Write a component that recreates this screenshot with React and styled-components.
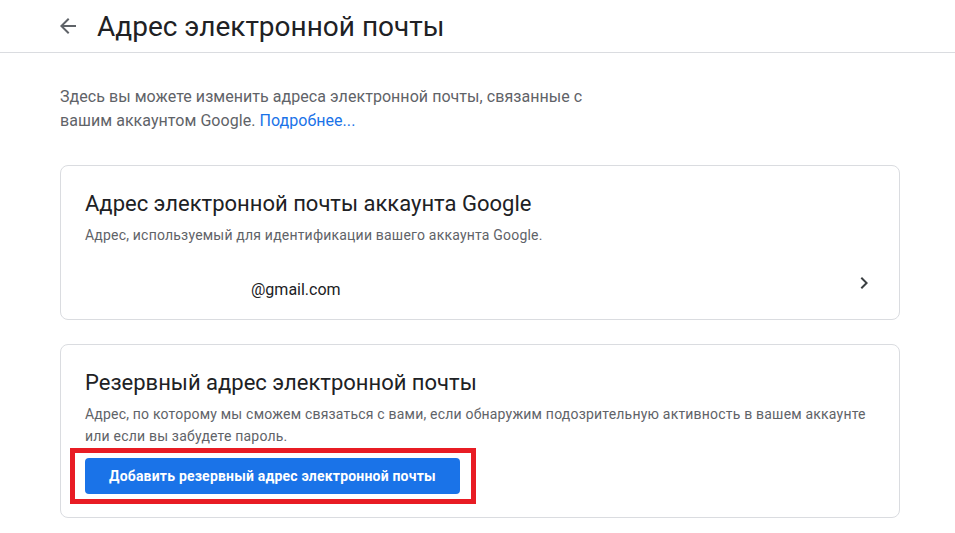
import styled, { createGlobalStyle } from 'styled-components';

const GlobalStyle = createGlobalStyle`
  body {
    margin: 0;
    background: #fff;
    font-family: Roboto, "Liberation Sans", Arial, sans-serif;
    color: #202124;
  }
`;

const Header = styled.header`
  display: flex;
  align-items: center;
  height: 52px;
  padding-left: 56px;
  border-bottom: 1px solid #dadce0;
`;

const BackButton = styled.button`
  display: flex;
  align-items: center;
  justify-content: center;
  width: 24px;
  height: 24px;
  padding: 0;
  margin-right: 17px;
  background: transparent;
  border: none;
  cursor: pointer;
  color: #5f6368;
`;

const Title = styled.h1`
  margin: 0;
  font-size: 28px;
  font-weight: 400;
  color: #202124;
`;

const Main = styled.main`
  width: 840px;
  margin-left: 60px;
  padding-top: 32px;
  display: flex;
  flex-direction: column;
  gap: 24px;
`;

const Intro = styled.p`
  margin: 0 0 8px;
  width: 540px;
  font-size: 16px;
  line-height: 24px;
  letter-spacing: 0.05px;
  color: #5f6368;

  a {
    color: #1a73e8;
    text-decoration: none;
  }
`;

const Card = styled.section`
  display: flex;
  flex-direction: column;
  border: 1px solid #dadce0;
  border-radius: 8px;
  padding: ${(p) => p.$pad};
`;

const CardTitle = styled.h2`
  margin: 0;
  font-size: 22px;
  font-weight: 400;
  line-height: 28px;
  color: #202124;
`;

const CardText = styled.p`
  margin: 6px 0 0;
  font-size: 14px;
  line-height: 22px;
  letter-spacing: 0.2px;
  color: #5f6368;
`;

const EmailRow = styled.div`
  display: flex;
  align-items: center;
  justify-content: space-between;
  height: 24px;
  margin-top: 31px;
  padding-left: 166px;
  font-size: 16px;
  color: #202124;
`;

const Chevron = styled.svg`
  position: relative;
  top: -6px;
  margin-right: -1px;
`;

const Highlight = styled.div`
  display: inline-flex;
  align-self: flex-start;
  margin: 1px 0 0 -15px;
  padding: 5px 11px 5px 10px;
  border: 5px solid #e81c24;
`;

const PrimaryButton = styled.button`
  height: 36px;
  padding: 0 24px;
  border: none;
  border-radius: 4px;
  background: #1a73e8;
  color: #fff;
  font-family: Roboto, "Liberation Sans", Arial, sans-serif;
  font-size: 14px;
  font-weight: 700;
  letter-spacing: 0.2px;
  cursor: pointer;
`;

export default function App() {
  return (
    <>
      <GlobalStyle />
      <Header>
        <BackButton type="button" aria-label="Назад">
          <svg width="24" height="24" viewBox="0 0 24 24" fill="currentColor">
            <path d="M20 11H7.83l5.59-5.59L12 4l-8 8 8 8 1.41-1.41L7.83 13H20v-2z" />
          </svg>
        </BackButton>
        <Title>Адрес электронной почты</Title>
      </Header>
      <Main>
        <Intro>
          Здесь вы можете изменить адреса электронной почты, связанные с вашим
          аккаунтом Google. <a href="#more">Подробнее...</a>
        </Intro>
        <Card $pad="24px 24px 18px 24px">
          <CardTitle>Адрес электронной почты аккаунта Google</CardTitle>
          <CardText>Адрес, используемый для идентификации вашего аккаунта Google.</CardText>
          <EmailRow>
            <span>@gmail.com</span>
            <Chevron width="24" height="24" viewBox="0 0 24 24" fill="#3c4043">
              <path d="M8.59 16.59L13.17 12 8.59 7.41 10 6l6 6-6 6-1.41-1.41z" />
            </Chevron>
          </EmailRow>
        </Card>
        <Card $pad="24px 24px 13px 24px">
          <CardTitle>Резервный адрес электронной почты</CardTitle>
          <CardText>
            Адрес, по которому мы сможем связаться с вами, если обнаружим подозрительную
            активность в вашем аккаунте или если вы забудете пароль.
          </CardText>
          <Highlight>
            <PrimaryButton type="button">Добавить резервный адрес электронной почты</PrimaryButton>
          </Highlight>
        </Card>
      </Main>
    </>
  );
}
